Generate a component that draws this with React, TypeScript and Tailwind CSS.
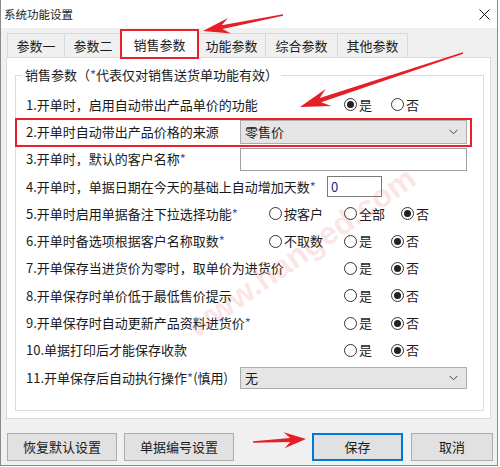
import React from "react";

type Pt = [number, number];

// tapered red annotation arrow, tail -> tip
function arrowPoints(tail: Pt, tip: Pt, tailW: number, shaftW: number, headW: number, headL: number) {
  const dx = tip[0] - tail[0];
  const dy = tip[1] - tail[1];
  const len = Math.hypot(dx, dy);
  const ux = dx / len;
  const uy = dy / len;
  const nx = -uy;
  const ny = ux;
  const neck = [tip[0] - ux * headL * 0.72, tip[1] - uy * headL * 0.72];
  const barb = [tip[0] - ux * headL, tip[1] - uy * headL];
  const p = (x: number, y: number) => `${x.toFixed(1)},${y.toFixed(1)}`;
  return [
    p(tail[0] + (nx * tailW) / 2, tail[1] + (ny * tailW) / 2),
    p(neck[0] + (nx * shaftW) / 2, neck[1] + (ny * shaftW) / 2),
    p(barb[0] + (nx * headW) / 2, barb[1] + (ny * headW) / 2),
    p(tip[0], tip[1]),
    p(barb[0] - (nx * headW) / 2, barb[1] - (ny * headW) / 2),
    p(neck[0] - (nx * shaftW) / 2, neck[1] - (ny * shaftW) / 2),
    p(tail[0] - (nx * tailW) / 2, tail[1] - (ny * tailW) / 2),
  ].join(" ");
}

function Star() {
  return <span className="text-[#3a5bb0]">*</span>;
}

function Radio({ label, checked, w }: { label: string; checked?: boolean; w?: string }) {
  return (
    <label className={`flex items-center shrink-0 ${w ?? ""}`}>
      <span className="w-[13px] h-[13px] rounded-full border border-[#333] bg-white flex items-center justify-center">
        {checked && <span className="w-[7px] h-[7px] rounded-full bg-[#222]" />}
      </span>
      <span className="ml-[2px]">{label}</span>
    </label>
  );
}

function Chevron() {
  return (
    <svg width="9" height="6" viewBox="0 0 9 6" className="shrink-0">
      <path d="M0.5 0.8 L4.5 4.8 L8.5 0.8" fill="none" stroke="#444" strokeWidth="1" />
    </svg>
  );
}

function Select({ value, h }: { value: string; h: string }) {
  return (
    <div className={`w-[227px] ${h} bg-[#e5e5e5] border border-[#adadad] flex items-center justify-between pl-[4px] pr-[8px]`}>
      <span>{value}</span>
      <Chevron />
    </div>
  );
}

function Row({ children, className = "" }: { children: React.ReactNode; className?: string }) {
  return <div className={`flex items-center h-[27.3px] pl-[10px] whitespace-nowrap ${className}`}>{children}</div>;
}

export default function App() {
  const tabs = ["参数一", "参数二", "销售参数", "功能参数", "综合参数", "其他参数"];
  const tabW = ["w-[58px]", "w-[58px]", "w-[77px]", "w-[69px]", "w-[73px]", "w-[71px]"];

  return (
    <div className="relative w-[498px] h-[466px] bg-[#f0f0f0] border-x border-b border-[#8a8a8a] flex flex-col text-[13px] leading-[18px] text-[#1a1a1a] font-['Noto_Sans_CJK_SC','Noto_Sans',sans-serif] overflow-hidden">
      {/* title bar */}
      <div className="h-[28px] bg-white flex items-center justify-between pl-[3px] pr-[7px] shrink-0">
        <span className="text-[11.5px]">系统功能设置</span>
        <svg width="11" height="11" viewBox="0 0 11 11">
          <path d="M0.5 0.5 L10.5 10.5 M10.5 0.5 L0.5 10.5" stroke="#111" strokeWidth="1" />
        </svg>
      </div>

      {/* tabs */}
      <div className="flex items-end h-[29px] pl-[7px] shrink-0">
        {tabs.map((t, i) => {
          const sel = i === 2;
          return (
            <div
              key={t}
              className={`${tabW[i]} -ml-px flex items-center justify-center border border-[#d9d9d9] ${
                sel ? "relative z-10 h-[28px] bg-white border-b-0 -mb-px" : "h-[24px] bg-[#f0f0f0] border-b-0"
              }`}
            >
              {t}
              {sel && <span className="absolute -left-[2px] -right-[2px] -top-[2px] -bottom-[1px] border-2 border-[#e8202a]" />}
            </div>
          );
        })}
      </div>

      {/* tab page */}
      <div className="ml-[5px] w-[485px] h-[362px] bg-white border border-[#d9d9d9] pt-[8px] pl-[8px] shrink-0">
        <fieldset className="w-[469px] h-[345px] border border-[#dcdcdc] pt-[7px]">
          <legend className="ml-[6px] px-[3px] leading-[18px]">
            销售参数（<Star />代表仅对销售送货单功能有效）
          </legend>

          <Row>
            <span className="w-[318px] shrink-0">1.开单时，启用自动带出产品单价的功能</span>
            <Radio label="是" checked w="w-[47px]" />
            <Radio label="否" />
          </Row>

          <Row className="relative">
            <span className="w-[214px] shrink-0">2.开单时自动带出产品价格的来源</span>
            <Select value="零售价" h="h-[24px]" />
            <span className="absolute -left-[1px] top-0 w-[457px] h-[29px] border-2 border-[#e8202a]" />
          </Row>

          <Row>
            <span className="w-[214px] shrink-0">
              3.开单时，默认的客户名称<Star />
            </span>
            <div className="w-[227px] h-[23px] bg-white border border-[#a0a0a0]" />
          </Row>

          <Row>
            <span className="w-[301px] shrink-0">
              4.开单时，单据日期在今天的基础上自动增加天数<Star />
            </span>
            <div className="w-[55px] h-[21px] bg-white border border-[#7a7a7a] flex items-center pl-[3px] text-[#1c2a80]">0</div>
          </Row>

          <Row>
            <span className="w-[243px] shrink-0">
              5.开单时启用单据备注下拉选择功能<Star />
            </span>
            <Radio label="按客户" w="w-[75px]" />
            <Radio label="全部" w="w-[57px]" />
            <Radio label="否" checked />
          </Row>

          <Row>
            <span className="w-[243px] shrink-0">
              6.开单时备选项根据客户名称取数<Star />
            </span>
            <Radio label="不取数" w="w-[75px]" />
            <Radio label="是" w="w-[47px]" />
            <Radio label="否" checked />
          </Row>

          <Row>
            <span className="w-[318px] shrink-0">7.开单保存当进货价为零时，取单价为进货价</span>
            <Radio label="是" w="w-[47px]" />
            <Radio label="否" checked />
          </Row>

          <Row>
            <span className="w-[318px] shrink-0">8.开单保存时单价低于最低售价提示</span>
            <Radio label="是" w="w-[47px]" />
            <Radio label="否" checked />
          </Row>

          <Row>
            <span className="w-[318px] shrink-0">
              9.开单保存时自动更新产品资料进货价<Star />
            </span>
            <Radio label="是" w="w-[47px]" />
            <Radio label="否" checked />
          </Row>

          <Row>
            <span className="w-[318px] shrink-0">10.单据打印后才能保存收款</span>
            <Radio label="是" w="w-[47px]" />
            <Radio label="否" checked />
          </Row>

          <Row>
            <span className="w-[214px] shrink-0">
              11.开单保存后自动执行操作<Star />(慎用)
            </span>
            <Select value="无" h="h-[22px]" />
          </Row>
        </fieldset>
      </div>

      {/* buttons */}
      <div className="flex items-center mt-[14px] pl-[6px] pr-[4px] gap-[7px]">
        <button className="w-[110px] h-[28px] bg-[#e1e1e1] border border-[#adadad]">恢复默认设置</button>
        <button className="w-[110px] h-[28px] bg-[#e1e1e1] border border-[#adadad]">单据编号设置</button>
        <button className="ml-auto w-[91px] h-[28px] bg-[#e1e1e1] border-2 border-[#0078d7]">保存</button>
        <button className="ml-[1px] w-[82px] h-[28px] bg-[#e1e1e1] border border-[#adadad]">取消</button>
      </div>

      {/* watermark */}
      <span className="pointer-events-none absolute left-[300px] top-[252px] -translate-x-1/2 -translate-y-1/2 -rotate-[35deg] text-[32px] font-bold font-['Liberation_Sans',sans-serif] text-[#e0303a]/15 whitespace-nowrap">
        www.hanged.com
      </span>

      {/* annotation arrows */}
      <svg className="pointer-events-none absolute left-[-1px] top-0" width="500" height="467" viewBox="0 0 500 467">
        <polygon points={arrowPoints([283, 15], [203, 31], 1.5, 4, 16, 27)} fill="#e61e25" />
        <polygon points={arrowPoints([463, 53], [300, 107], 1.5, 4.5, 18, 30)} fill="#e61e25" />
        <polygon points={arrowPoints([253, 442], [306, 439], 1.5, 4, 16, 22)} fill="#e61e25" />
      </svg>
    </div>
  );
}
